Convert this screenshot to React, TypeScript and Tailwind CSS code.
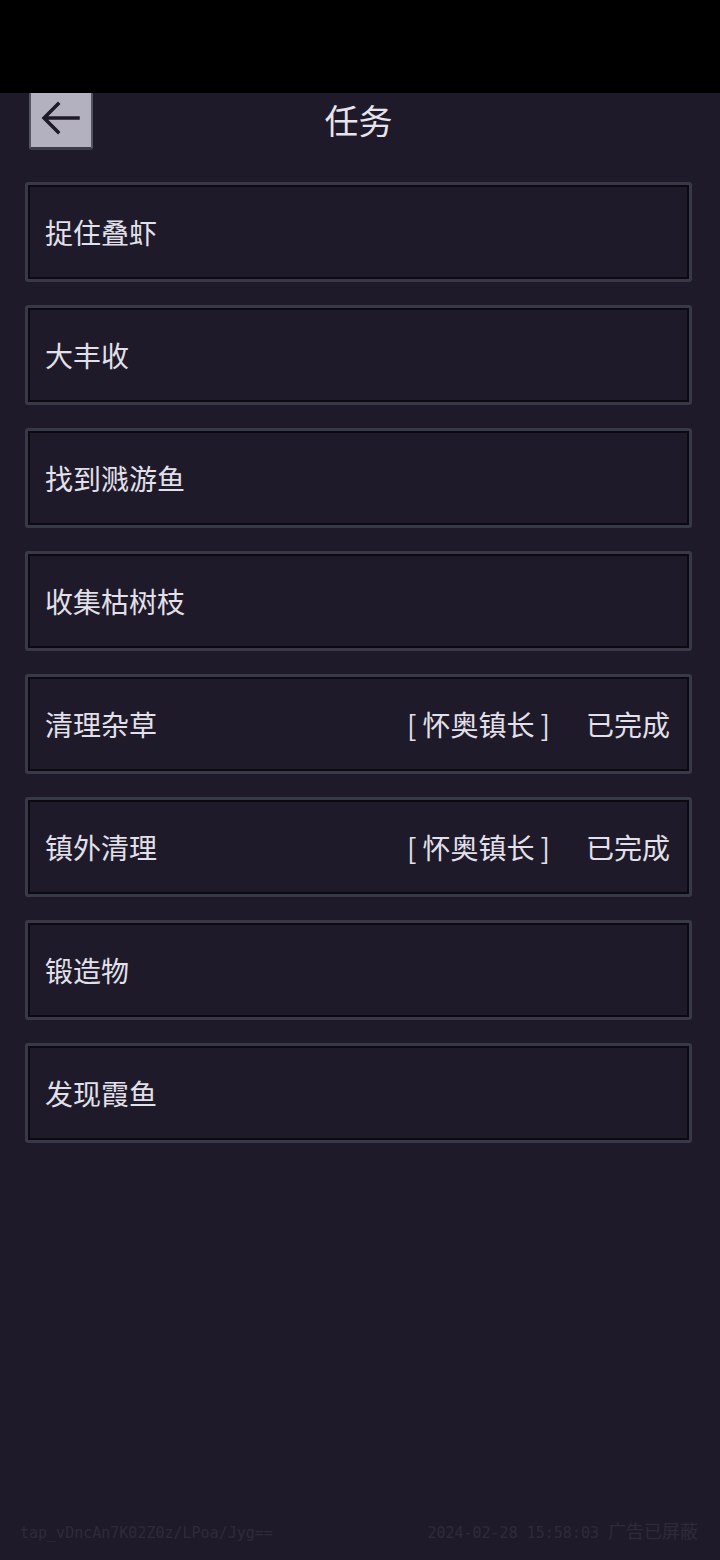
import clsx from 'clsx';

type Quest = {
  name: string;
  giver?: string;
  status?: string;
};

const quests: Quest[] = [
  { name: '捉住叠虾' },
  { name: '大丰收' },
  { name: '找到溅游鱼' },
  { name: '收集枯树枝' },
  { name: '清理杂草', giver: '怀奥镇长', status: '已完成' },
  { name: '镇外清理', giver: '怀奥镇长', status: '已完成' },
  { name: '锻造物' },
  { name: '发现霞鱼' },
];

const cjk = "font-['Noto_Sans_CJK_SC','Noto_Sans',sans-serif]";

function QuestCard({ quest }: { quest: Quest }) {
  return (
    <div className="h-[100px] rounded-[3px] border-[3px] border-[#393848]">
      <div className="flex h-full items-center border-2 border-[#0c0a11] pl-[15px] pr-[17px] text-[28px] leading-none text-[#e2e0ea]">
        <span className="flex-1">{quest.name}</span>
        {quest.giver && (
          <span className="mr-[36px]">
            <span className="mr-[6px]">[</span>
            {quest.giver}
            <span className="ml-[6px]">]</span>
          </span>
        )}
        {quest.status && <span>{quest.status}</span>}
      </div>
    </div>
  );
}

export default function App() {
  return (
    <div className={clsx('flex h-[1560px] flex-col bg-[#1f1a29]', cjk)}>
      <div className="h-[93px] bg-black" />

      <div className="relative flex h-[57px] items-center justify-center">
        <button className="absolute left-[29px] top-0 flex h-[57px] w-[64px] items-center justify-center rounded-b-[3px] border-x-2 border-b-[3px] border-x-[#55535f] border-b-[#3d3b4a] bg-[#b3b0bf]">
          <svg width="40" height="34" viewBox="0 0 40 34" className="-mt-[5px]">
            <path
              d="M37 17H4M17 3L3 17l14 14"
              fill="none"
              stroke="#1f1a29"
              strokeWidth="3.5"
              strokeLinecap="square"
            />
          </svg>
        </button>
        <span className="-mt-[4px] ml-[-3px] text-[34px] leading-none text-[#e6e4ec]">任务</span>
      </div>

      <div className="mt-[32px] flex flex-col gap-[23px] px-[25px] pr-[28px]">
        {quests.map((q) => (
          <QuestCard key={q.name} quest={q} />
        ))}
      </div>

      <div className="mt-auto flex items-center justify-between pb-[17px] pl-[20px] pr-[22px] font-['DejaVu_Sans_Mono','Noto_Sans_CJK_SC',monospace] text-[15px] leading-5 text-[#2e2a3b]">
        <span>tap_vDncAn7K02Z0z/LPoa/Jyg==</span>
        <span>
          2024-02-28 15:58:03 <span className="text-[18px]">广告已屏蔽</span>
        </span>
      </div>
    </div>
  );
}
